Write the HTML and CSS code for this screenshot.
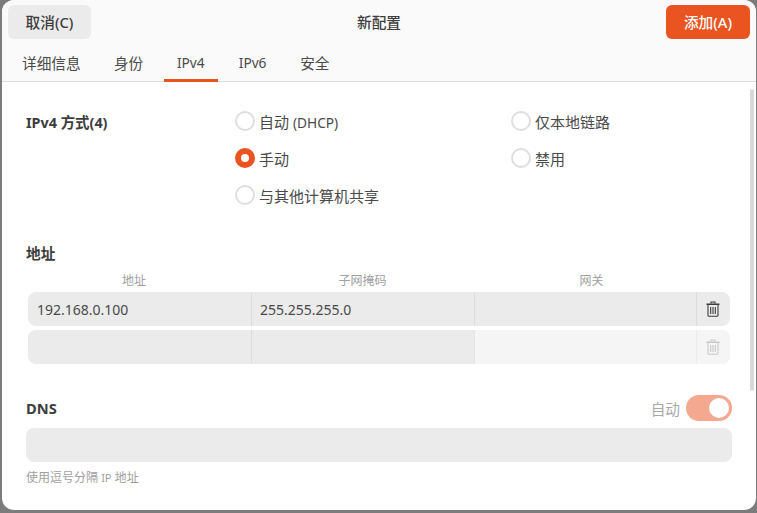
FILE: index.html
```html
<!DOCTYPE html>
<html lang="zh-CN">
<head>
<meta charset="utf-8">
<title>新配置</title>
<link rel="stylesheet" href="styles.css">
</head>
<body>
<div class="window">
  <header class="titlebar">
    <button class="btn cancel">取消(C)</button>
    <div class="title">新配置</div>
    <button class="btn add">添加(A)</button>
  </header>
  <nav class="tabs">
    <span class="tab">详细信息</span>
    <span class="tab">身份</span>
    <span class="tab latin active">IPv4</span>
    <span class="tab latin">IPv6</span>
    <span class="tab">安全</span>
  </nav>
  <main class="content">
    <div class="scrollbar"></div>
    <section class="method">
      <div class="method-label">IPv4 方式(4)</div>
      <div class="radios">
        <label class="radio"><i class="dot"></i><span>自动 <span class="small">(DHCP)</span></span></label>
        <label class="radio"><i class="dot"></i>仅本地链路</label>
        <label class="radio"><i class="dot on"></i>手动</label>
        <label class="radio"><i class="dot"></i>禁用</label>
        <label class="radio"><i class="dot"></i>与其他计算机共享</label>
      </div>
    </section>
    <h2 class="heading addr-h">地址</h2>
    <div class="cols">
      <span>地址</span><span>子网掩码</span><span>网关</span>
    </div>
    <div class="row">
      <div class="cell c1">192.168.0.100</div>
      <div class="cell c2">255.255.255.0</div>
      <div class="cell c3"></div>
      <div class="cell trash">
        <svg viewBox="0 0 14 16" width="14" height="16"><path d="M5 2.500V1h4v1.500" fill="none" stroke="currentColor" stroke-width="1.100"/><path d="M.5 3.200h13" fill="none" stroke="currentColor" stroke-width="1.500"/><path d="M2 4v10.300q0 1 1 1h8q1 0 1-1V4" fill="none" stroke="currentColor" stroke-width="1.100"/><path d="M4.700 6v7M7 6v7M9.300 6v7" fill="none" stroke="currentColor" stroke-width="1.100"/></svg>
      </div>
    </div>
    <div class="row dim">
      <div class="cell c1"></div>
      <div class="cell c2"></div>
      <div class="cell c3"></div>
      <div class="cell trash">
        <svg viewBox="0 0 14 16" width="14" height="16"><path d="M5 2.500V1h4v1.500" fill="none" stroke="currentColor" stroke-width="1.100"/><path d="M.5 3.200h13" fill="none" stroke="currentColor" stroke-width="1.500"/><path d="M2 4v10.300q0 1 1 1h8q1 0 1-1V4" fill="none" stroke="currentColor" stroke-width="1.100"/><path d="M4.700 6v7M7 6v7M9.300 6v7" fill="none" stroke="currentColor" stroke-width="1.100"/></svg>
      </div>
    </div>
    <div class="dns-head">
      <h2 class="heading">DNS</h2>
      <div class="auto"><span>自动</span><span class="switch"><i></i></span></div>
    </div>
    <div class="entry"></div>
    <p class="hint">使用逗号分隔 <span class="ip">IP</span> 地址</p>
  </main>
</div>
</body>
</html>
```
FILE: styles.css
```css
* { box-sizing: border-box; }
html, body { margin: 0; height: 100%; }
body {
  width: 757px; height: 513px; overflow: hidden;
  background: #7c7c7c;
  font-family: "Noto Sans", "Noto Sans CJK SC", sans-serif;
  color: #3d3d3d;
  padding: 0 1px 3px 2px;
}
.window { height: 510px; background: #fff; border-radius: 12px; overflow: hidden; display: flex; flex-direction: column; }
.titlebar { height: 47px; background: #fafafa; display: flex; align-items: flex-start; justify-content: space-between; padding: 5px 6px 0 6px; flex: none; }
.btn { height: 34px; padding: 0 0 2px; border: 0; border-radius: 6px; font: 500 14.670px "Noto Sans", "Noto Sans CJK SC", sans-serif; }
.cancel { width: 83px; background: #ebebeb; color: #3d3d3d; }
.add { width: 84px; background: #e95420; color: #fff; }
.title { margin-left: 1px; font-size: 14.670px; font-weight: 500; line-height: 34px; }
.tabs { height: 35px; background: #fafafa; border-bottom: 1px solid #dcdcdc; display: flex; gap: 7.300px; padding-left: 7px; flex: none; font-size: 14.670px; }
.tab { padding: 0 13px; height: 35px; line-height: 32px; color: #4a4a4a; }
.tab.latin { width: 54.500px; padding: 0; text-align: center; font-size: 13.700px; }
.tab.active { border-bottom: 3px solid #e95420; }
.content { flex: 1; position: relative; padding: 0 0 0 24px; }
.scrollbar { position: absolute; top: 7px; right: 2px; width: 4px; height: 302px; background: #d9d9d9; border-radius: 2px; }
.method { display: flex; padding-top: 27px; height: 138px; }
.method-label { width: 209px; margin-top: 2px; font-size: 14.400px; font-weight: 700; line-height: 24px; }
.radios { display: grid; grid-template-columns: 276px 200px; grid-auto-rows: 37px; }
.radio { display: flex; align-items: center; gap: 4px; height: 24px; font-size: 15px; color: #4a4a4a; }
.small { font-size: 13.700px; }
.dot { width: 20px; height: 20px; border-radius: 50%; border: 2px solid #dedede; background: #fff; }
.dot.on { border: 6px solid #e95420; }
.heading { margin: 0; font-size: 14.670px; font-weight: 700; line-height: 20px; }
.addr-h { margin-top: 23px; }
.cols { display: grid; grid-template-columns: 216px 241px 217px; margin-top: 11px; font-size: 12px; color: #a0a0a0; line-height: 14px; text-align: center; }
.row { display: flex; width: 702px; height: 34px; margin: 4px 0 4px 2px; background: #ebebeb; border-radius: 8px; font-size: 14px; color: #4a4a4a; }
.row.dim .c3, .row.dim .trash { background: #f5f5f5; }
.cell { height: 34px; line-height: 35px; padding-left: 9px; }
.cell.c1 { width: 224px; border-right: 1px solid #dcdcdc; }
.cell.c2 { width: 223px; padding-left: 8px; border-right: 1px solid #dcdcdc; }
.cell.c3 { width: 222px; border-right: 1px solid #dcdcdc; }
.cell.trash { flex: 1; padding: 0 1px 0 0; display: flex; align-items: center; justify-content: center; color: #3d3d3d; border-radius: 0 8px 8px 0; }
.row.dim .trash { color: #c8c8c8; }
.row.dim .c2 { border-right-color: #e4e4e4; }
.row.dim .c3 { border-right-color: #ebebeb; }
.dns-head { display: flex; justify-content: space-between; align-items: center; width: 706px; margin-top: 30px; height: 28px; }
.auto { display: flex; align-items: center; gap: 6px; font-size: 14.670px; color: #a8a8a8; }
.switch { width: 46px; height: 26px; border-radius: 13px; background: #f4a88f; padding: 3px; display: flex; justify-content: flex-end; }
.switch i { width: 20px; height: 20px; border-radius: 50%; background: #fff; }
.entry { width: 706px; height: 34px; margin-top: 6px; background: #ebebeb; border-radius: 8px; }
.hint { margin: 8px 0 0; font-size: 12px; line-height: 16px; color: #a0a0a0; }
.ip { font-size: 11px; }
```
